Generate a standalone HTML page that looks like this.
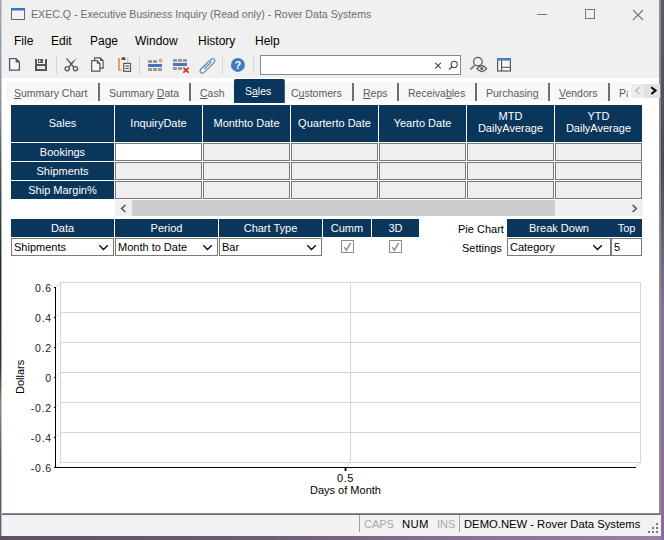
<!DOCTYPE html>
<html><head><meta charset="utf-8">
<style>
*{margin:0;padding:0;box-sizing:border-box}
html,body{width:664px;height:540px;overflow:hidden;background:#7a6a80;font-family:"Liberation Sans",sans-serif}
.a{position:absolute}
#win{position:absolute;left:1px;top:0;width:660px;height:536px;background:#fff;overflow:hidden}
#edge{position:absolute;left:0;top:0;width:1px;height:540px;background:linear-gradient(#a0a4b4 0%,#8a90a0 20%,#506058 30%,#1e2e2a 50%,#2a3a36 68%,#8a8a70 75%,#605868 85%,#6a5a72 100%)}
#edge2{position:absolute;left:1px;top:0;width:1px;height:536px;opacity:.45;background:linear-gradient(#a0a4b4 0%,#8a90a0 20%,#506058 30%,#1e2e2a 50%,#2a3a36 68%,#8a8a70 75%,#605868 85%,#6a5a72 100%)}
#redge{position:absolute;left:659px;top:0;width:2px;height:536px;background:#8c8c8c}
#title{position:absolute;left:0;top:0;width:664px;height:52px;background:#f0f0f0}
.ttl{position:absolute;left:31px;top:8px;font-size:10.6px;color:#6d6d6d;white-space:nowrap}
.menu{position:absolute;top:34px;font-size:12px;color:#000;white-space:nowrap}
#tb{position:absolute;left:0;top:52px;width:664px;height:26px;background:#f0f0f0}
.sep{position:absolute;top:55px;width:1px;height:19px;background:#d5d5d5}
.tab{position:absolute;top:87px;font-size:10.5px;color:#5a5a5a;white-space:nowrap}
.tsep{position:absolute;top:83px;width:2px;height:18px;background:#6e6e6e}
.nv{position:absolute;background:#0b365c;color:#fff;font-size:11px;text-align:center;white-space:nowrap}
.cell{position:absolute;background:#efefef;border:1px solid #7a7a7a}
.cb{position:absolute;background:#fff;border:1px solid #7a7a7a;font-size:11px;color:#000;white-space:nowrap}
.lbl{position:absolute;font-size:11px;color:#000;white-space:nowrap}
.yl{position:absolute;font-size:10.5px;color:#1a1a1a;text-align:right;width:31px;white-space:nowrap;letter-spacing:0.8px}
.gl{position:absolute;left:61px;width:580px;height:1px;background:#d3d3d3}
</style></head><body>
<div id="win">
</div>
<div id="title"></div>
<div id="tb"></div>
<div id="edge"></div><div id="edge2"></div>
<div id="redge"></div>

<!-- title bar -->
<svg class="a" style="left:11px;top:8px" width="15" height="13" viewBox="0 0 15 13">
<rect x="0.5" y="0.5" width="13" height="11" fill="#f4f4f4" stroke="#5b6878" stroke-width="1"/>
<rect x="0" y="0" width="14" height="2.5" fill="#2f78c4"/>
</svg>
<div class="ttl">EXEC.Q - Executive Business Inquiry (Read only) - Rover Data Systems</div>
<svg class="a" style="left:530px;top:0" width="130" height="30">
<line x1="7" y1="14.5" x2="17" y2="14.5" stroke="#777" stroke-width="1"/>
<rect x="55.5" y="9.5" width="9" height="9" fill="none" stroke="#777" stroke-width="1"/>
<path d="M103 10 L113 20 M113 10 L103 20" stroke="#777" stroke-width="1.1"/>
</svg>

<!-- menu -->
<div class="menu" style="left:14px">File</div>
<div class="menu" style="left:51px">Edit</div>
<div class="menu" style="left:90px">Page</div>
<div class="menu" style="left:135px">Window</div>
<div class="menu" style="left:198px">History</div>
<div class="menu" style="left:255px">Help</div>

<!-- toolbar -->
<div class="sep" style="left:56px"></div>
<div class="sep" style="left:139px"></div>
<div class="sep" style="left:222px"></div>
<div class="sep" style="left:253px"></div>

<!-- search -->
<div class="a" style="left:260px;top:55px;width:201px;height:20px;background:#fff;border:1px solid #8a8a8a"></div>


<!-- toolbar icons -->
<svg class="a" style="left:0;top:52px" width="520" height="26" viewBox="0 52 520 26">
 <!-- new doc -->
 <path d="M9.6 58.6 H16 L19.4 62 V70.2 H9.6 Z" fill="#f7f7f7" stroke="#555" stroke-width="1.3"/>
 <path d="M15.6 58 L20 62.4 H15.6 Z" fill="#555"/>
 <!-- floppy -->
 <path fill="#555" d="M35 59 H37 V71 H35 Z M45 59 H47 V71 H45 Z M35 64 H47 V66 H35 Z M35 69 H47 V71 H35 Z"/>
 <path fill="#555" fill-rule="evenodd" d="M38 59 H43 V63 H38 Z M39 60 H40.4 V62 H39 Z"/>
 <rect x="37.5" y="67.2" width="6.5" height="0.7" fill="#c8c8c8"/>
 <!-- scissors -->
 <circle cx="67.2" cy="68.8" r="2.1" fill="none" stroke="#555" stroke-width="1.3"/>
 <circle cx="75.5" cy="68.8" r="2.1" fill="none" stroke="#555" stroke-width="1.3"/>
 <path d="M66.5 58.4 L73.6 67" stroke="#555" stroke-width="1.3"/>
 <path d="M76.8 58.3 L72 64.2 L70.6 63 Z" fill="#555"/>
 <path d="M69 67 L71.5 64" stroke="#555" stroke-width="1.3"/>
 <!-- copy -->
 <path d="M94.6 57.9 H100.2 L103.1 60.8 V68.2 H94.6 Z" fill="#f7f7f7" stroke="#555" stroke-width="1.2"/>
 <path d="M100 57.4 L103.6 61 H100 Z" fill="#555"/>
 <path d="M91.7 60.7 H97 L99.9 63.6 V71.1 H91.7 Z" fill="#f7f7f7" stroke="#555" stroke-width="1.2"/>
 <path d="M96.8 60.2 L100.4 63.8 H96.8 Z" fill="#555"/>
 <!-- paste -->
 <rect x="118" y="58" width="2" height="12.6" fill="#f0a040"/>
 <rect x="119.5" y="69.6" width="2" height="1" fill="#888"/>
 <path d="M121.2 60 L121.7 57.8 Q123.5 56.4 125.3 57.8 L125.8 60 Z" fill="#555"/>
 <rect x="127.2" y="57.8" width="1" height="1.6" fill="#aaa"/>
 <rect x="127.2" y="60.4" width="1" height="1.6" fill="#aaa"/>
 <rect x="123.7" y="63.4" width="6.8" height="7.9" fill="#f7f7f7" stroke="#555" stroke-width="1.2"/>
 <rect x="125.3" y="65.3" width="3.6" height="1.2" fill="#555"/>
 <rect x="125.3" y="67.8" width="3.6" height="1.2" fill="#555"/>
 <!-- insert row -->
 <rect x="148" y="60" width="4" height="3" fill="#9a9a9a"/>
 <rect x="153" y="60" width="4" height="3" fill="#9a9a9a"/>
 <circle cx="160.6" cy="60.6" r="2.1" fill="#f0a860"/>
 <rect x="148" y="64" width="14" height="3" fill="#4676b6"/>
 <rect x="148" y="68" width="4" height="3" fill="#9a9a9a"/>
 <rect x="153" y="68" width="4" height="3" fill="#9a9a9a"/>
 <rect x="158" y="68" width="4" height="3" fill="#9a9a9a"/>
 <!-- delete row -->
 <rect x="173" y="59" width="4" height="3" fill="#9a9a9a"/>
 <rect x="178" y="59" width="4" height="3" fill="#9a9a9a"/>
 <rect x="183" y="59" width="4" height="3" fill="#9a9a9a"/>
 <rect x="173" y="63" width="14" height="3" fill="#4676b6"/>
 <rect x="173" y="67" width="4" height="3" fill="#9a9a9a"/>
 <rect x="178" y="67" width="4" height="3" fill="#9a9a9a"/>
 <path d="M183.4 67.6 L188.6 72.6 M188.6 67.6 L183.4 72.6" stroke="#d42a2a" stroke-width="1.6"/>
 <!-- paperclip -->
 <path d="M203.5 66.8 L210.6 59.6 Q212.6 57.7 214.2 59.3 Q215.8 60.9 213.8 62.9 L205.2 71.4 Q202.2 74.3 200.6 72.6 Q199.0 70.9 201.9 68.0 L208.6 61.4 Q209.8 60.3 210.6 61.1 Q211.4 61.9 210.2 63.1 L204.2 69" fill="none" stroke="#6a8ab0" stroke-width="1.2"/>
 <!-- help -->
 <circle cx="237.9" cy="64.9" r="7" fill="#3f7dc0"/>
 <text x="237.9" y="68.9" font-family="Liberation Sans" font-weight="bold" font-size="10.5" fill="#fff" text-anchor="middle">?</text>
 <!-- search x and magnifier -->
 <path d="M435.3 62.8 L440.8 68.3 M440.8 62.8 L435.3 68.3" stroke="#444" stroke-width="1.1"/>
 <circle cx="454.2" cy="64.4" r="3.1" fill="none" stroke="#444" stroke-width="1.1"/>
 <path d="M452.0 66.7 L449.0 69.6" stroke="#444" stroke-width="1.2"/>
 <!-- magnifier eye -->
 <circle cx="477.9" cy="61.6" r="4.3" fill="none" stroke="#555" stroke-width="1.2"/>
 <path d="M470.4 69.4 L474.6 65.4" stroke="#5a80ac" stroke-width="1.9"/>
 <path d="M476.9 68.6 Q481.8 62.6 486.7 68.6 Q481.8 74.6 476.9 68.6 Z" fill="#f0f0f0" stroke="#555" stroke-width="1.2"/>
 <circle cx="481.8" cy="68.5" r="1.5" fill="#555"/>
 <!-- layout -->
 <rect x="497.6" y="58.6" width="12.8" height="12.4" fill="#f7f7f7" stroke="#555" stroke-width="1.2"/>
 <rect x="497" y="58" width="14" height="2.6" fill="#4a7cc0"/>
 <rect x="501" y="60.5" width="1.1" height="10.5" fill="#555"/>
 <rect x="501" y="66.8" width="10" height="1.1" fill="#555"/>
</svg>

<!-- tabs -->
<div class="a" style="left:6px;top:82px;width:624px;height:19px;background:#f7f7f7"></div>
<div class="tab" style="left:14px"><u>S</u>ummary Chart</div>
<div class="tsep" style="left:98px"></div>
<div class="tab" style="left:109px">Summary <u>D</u>ata</div>
<div class="tsep" style="left:189px"></div>
<div class="tab" style="left:200px"><u>C</u>ash</div>
<div class="a" style="left:234px;top:79px;width:51px;height:24px;background:#0b365c;border-radius:2px 2px 0 0;border-right:1px solid #4a5e74"></div>
<div class="tab" style="left:245px;top:85px;color:#fff">S<u>a</u>les</div>
<div class="tab" style="left:291px">C<u>u</u>stomers</div>
<div class="tsep" style="left:352px"></div>
<div class="tab" style="left:363px"><u>R</u>eps</div>
<div class="tsep" style="left:397px"></div>
<div class="tab" style="left:408px">Receiva<u>b</u>les</div>
<div class="tsep" style="left:475px"></div>
<div class="tab" style="left:486px">Purchasin<u>g</u></div>
<div class="tsep" style="left:548px"></div>
<div class="tab" style="left:559px"><u>V</u>endors</div>
<div class="tsep" style="left:608px"></div>
<div class="tab" style="left:619px;width:9px;overflow:hidden">Pa</div>
<div class="a" style="left:631px;top:84px;width:13px;height:14px;background:#ececec"></div>
<div class="a" style="left:644px;top:84px;width:16px;height:14px;background:#e2e2e2"></div>

<!-- grid header -->
<div class="nv" style="left:11px;top:105px;width:103px;height:37px;line-height:37px">Sales</div>
<div class="nv" style="left:115px;top:105px;width:87px;height:37px;line-height:37px">InquiryDate</div>
<div class="nv" style="left:203px;top:105px;width:87px;height:37px;line-height:37px">Monthto Date</div>
<div class="nv" style="left:291px;top:105px;width:87px;height:37px;line-height:37px">Quarterto Date</div>
<div class="nv" style="left:379px;top:105px;width:87px;height:37px;line-height:37px">Yearto Date</div>
<div class="nv" style="left:467px;top:105px;width:87px;height:37px;padding-top:6px;line-height:11.5px">MTD<br>DailyAverage</div>
<div class="nv" style="left:555px;top:105px;width:87px;height:37px;padding-top:6px;line-height:11.5px">YTD<br>DailyAverage</div>

<div class="nv" style="left:11px;top:143px;width:103px;height:18px;line-height:18px">Bookings</div>
<div class="nv" style="left:11px;top:162px;width:103px;height:18px;line-height:18px">Shipments</div>
<div class="nv" style="left:11px;top:181px;width:103px;height:18px;line-height:18px">Ship Margin%</div>

<div class="cell" style="left:115px;top:143px;width:87px;height:18px;background:#fff"></div>
<div class="cell" style="left:203px;top:143px;width:87px;height:18px"></div>
<div class="cell" style="left:291px;top:143px;width:87px;height:18px"></div>
<div class="cell" style="left:379px;top:143px;width:87px;height:18px"></div>
<div class="cell" style="left:467px;top:143px;width:87px;height:18px"></div>
<div class="cell" style="left:555px;top:143px;width:87px;height:18px"></div>
<div class="cell" style="left:115px;top:162px;width:87px;height:18px"></div>
<div class="cell" style="left:203px;top:162px;width:87px;height:18px"></div>
<div class="cell" style="left:291px;top:162px;width:87px;height:18px"></div>
<div class="cell" style="left:379px;top:162px;width:87px;height:18px"></div>
<div class="cell" style="left:467px;top:162px;width:87px;height:18px"></div>
<div class="cell" style="left:555px;top:162px;width:87px;height:18px"></div>
<div class="cell" style="left:115px;top:181px;width:87px;height:18px"></div>
<div class="cell" style="left:203px;top:181px;width:87px;height:18px"></div>
<div class="cell" style="left:291px;top:181px;width:87px;height:18px"></div>
<div class="cell" style="left:379px;top:181px;width:87px;height:18px"></div>
<div class="cell" style="left:467px;top:181px;width:87px;height:18px"></div>
<div class="cell" style="left:555px;top:181px;width:87px;height:18px"></div>

<!-- scrollbar -->
<div class="a" style="left:115px;top:200px;width:528px;height:16px;background:#f0f0f0"></div>
<div class="a" style="left:132px;top:200px;width:423px;height:16px;background:#cdcdcd"></div>

<!-- controls -->
<div class="nv" style="left:11px;top:219px;width:103px;height:18px;line-height:18px">Data</div>
<div class="nv" style="left:115px;top:219px;width:103px;height:18px;line-height:18px">Period</div>
<div class="nv" style="left:219px;top:219px;width:103px;height:18px;line-height:18px">Chart Type</div>
<div class="nv" style="left:323px;top:219px;width:48px;height:18px;line-height:18px">Cumm</div>
<div class="nv" style="left:372px;top:219px;width:47px;height:18px;line-height:18px">3D</div>
<div class="nv" style="left:507px;top:219px;width:104px;height:18px;line-height:18px">Break Down</div>
<div class="nv" style="left:611px;top:219px;width:31px;height:18px;line-height:18px">Top</div>

<div class="cb" style="left:11px;top:238px;width:103px;height:18px;line-height:16px;padding-left:2px">Shipments</div>
<div class="cb" style="left:115px;top:238px;width:103px;height:18px;line-height:16px;padding-left:2px">Month to Date</div>
<div class="cb" style="left:219px;top:238px;width:103px;height:18px;line-height:16px;padding-left:2px">Bar</div>
<div class="cb" style="left:507px;top:238px;width:104px;height:18px;line-height:16px;padding-left:2px">Category</div>
<div class="cb" style="left:611px;top:238px;width:31px;height:18px;line-height:16px;padding-left:2px">5</div>
<div class="lbl" style="left:458px;top:223px">Pie Chart</div>
<div class="lbl" style="left:462px;top:242px">Settings</div>


<!-- scroll arrows, chevrons, checkboxes -->
<svg class="a" style="left:0;top:0" width="664" height="540">
 <path d="M125.4 205 L121.6 208.5 L125.4 212" fill="none" stroke="#555" stroke-width="1.6"/>
 <path d="M632.6 205 L636.4 208.5 L632.6 212" fill="none" stroke="#555" stroke-width="1.6"/>
 <path d="M639.5 87.2 L635.8 90.6 L639.5 94" fill="none" stroke="#c4c4c4" stroke-width="1.6"/>
 <path d="M651.3 87.2 L655.6 90.6 L651.3 94" fill="none" stroke="#000" stroke-width="2"/>
 <path d="M99.3 245.3 L103.5 249.5 L107.8 245.3" fill="none" stroke="#000" stroke-width="1.3"/>
 <path d="M203.3 245.3 L207.5 249.5 L211.8 245.3" fill="none" stroke="#000" stroke-width="1.3"/>
 <path d="M307.3 245.3 L311.5 249.5 L315.8 245.3" fill="none" stroke="#000" stroke-width="1.3"/>
 <path d="M593.3 245.3 L597.5 249.5 L601.8 245.3" fill="none" stroke="#000" stroke-width="1.3"/>
 <rect x="341.5" y="240.5" width="12" height="12" fill="#fff" stroke="#8c8c8c" stroke-width="1"/>
 <path d="M344.3 247.3 L346.5 250.2 L350.6 243" fill="none" stroke="#8c8c8c" stroke-width="1.5"/>
 <rect x="389.5" y="240.5" width="12" height="12" fill="#fff" stroke="#8c8c8c" stroke-width="1"/>
 <path d="M392.3 247.3 L394.5 250.2 L398.6 243" fill="none" stroke="#8c8c8c" stroke-width="1.5"/>
</svg>

<!-- chart -->
<svg class="a" style="left:0;top:0" width="664" height="540">
<rect x="60.5" y="282.5" width="580" height="180" fill="none" stroke="#d6d6d6" stroke-width="1"/>
<line x1="61" y1="312.5" x2="640" y2="312.5" stroke="#d6d6d6" stroke-width="1"/>
<line x1="61" y1="342.5" x2="640" y2="342.5" stroke="#d6d6d6" stroke-width="1"/>
<line x1="61" y1="372.5" x2="640" y2="372.5" stroke="#d6d6d6" stroke-width="1"/>
<line x1="61" y1="402.5" x2="640" y2="402.5" stroke="#d6d6d6" stroke-width="1"/>
<line x1="61" y1="432.5" x2="640" y2="432.5" stroke="#d6d6d6" stroke-width="1"/>
<line x1="55.5" y1="287.5" x2="60.8" y2="282.2" stroke="#d6d6d6" stroke-width="1"/>
<rect x="54" y="287" width="1" height="1" fill="#000"/>
<line x1="55.5" y1="317.5" x2="60.8" y2="312.2" stroke="#d6d6d6" stroke-width="1"/>
<rect x="54" y="317" width="1" height="1" fill="#000"/>
<line x1="55.5" y1="347.5" x2="60.8" y2="342.2" stroke="#d6d6d6" stroke-width="1"/>
<rect x="54" y="347" width="1" height="1" fill="#000"/>
<line x1="55.5" y1="377.5" x2="60.8" y2="372.2" stroke="#d6d6d6" stroke-width="1"/>
<rect x="54" y="377" width="1" height="1" fill="#000"/>
<line x1="55.5" y1="407.5" x2="60.8" y2="402.2" stroke="#d6d6d6" stroke-width="1"/>
<rect x="54" y="407" width="1" height="1" fill="#000"/>
<line x1="55.5" y1="437.5" x2="60.8" y2="432.2" stroke="#d6d6d6" stroke-width="1"/>
<rect x="54" y="437" width="1" height="1" fill="#000"/>
<line x1="55.5" y1="467.5" x2="60.8" y2="462.2" stroke="#d6d6d6" stroke-width="1"/>
<rect x="54" y="467" width="1" height="1" fill="#000"/>
<line x1="350.5" y1="282.5" x2="350.5" y2="462.5" stroke="#d6d6d6" stroke-width="1"/>
<line x1="350.5" y1="462.5" x2="345.5" y2="467.5" stroke="#d6d6d6" stroke-width="1"/>
<line x1="640.5" y1="462.5" x2="635.5" y2="467.5" stroke="#d6d6d6" stroke-width="1"/>
<rect x="55" y="287" width="1" height="181" fill="#000"/>
<rect x="54" y="467" width="582" height="1" fill="#000"/>
<rect x="344.6" y="467" width="1.8" height="4" fill="#000"/>
</svg>

<div class="yl" style="left:21px;top:282px">0.6</div>
<div class="yl" style="left:21px;top:312px">0.4</div>
<div class="yl" style="left:21px;top:342px">0.2</div>
<div class="yl" style="left:21px;top:372px">0</div>
<div class="yl" style="left:21px;top:402px">-0.2</div>
<div class="yl" style="left:21px;top:432px">-0.4</div>
<div class="yl" style="left:21px;top:462px">-0.6</div>
<div class="lbl" style="left:337px;top:472px;letter-spacing:0.6px">0.5</div>
<div class="lbl" style="left:310px;top:484px">Days of Month</div>
<div class="lbl" style="left:2px;top:370px;transform:rotate(-90deg);transform-origin:center;width:36px">Dollars</div>

<!-- status bar -->
<div class="a" style="left:2px;top:513px;width:658px;height:2px;background:linear-gradient(#909090 50%,#686868 50%)"></div>
<div class="a" style="left:2px;top:515px;width:659px;height:21px;background:#f2f2f2"></div>
<div class="a" style="left:359px;top:515px;width:1px;height:17px;background:#a0a0a0"></div>
<div class="a" style="left:459px;top:515px;width:1px;height:17px;background:#a0a0a0"></div>
<div class="a" style="left:364px;top:518px;font-size:11px;color:#a8a8a8">CAPS</div>
<div class="a" style="left:402px;top:518px;font-size:11.3px;letter-spacing:0.4px;color:#000">NUM</div>
<div class="a" style="left:437px;top:518px;font-size:11px;color:#a8a8a8">INS</div>
<div class="a" style="left:464px;top:518px;font-size:11.25px;color:#000;white-space:nowrap">DEMO.NEW - Rover Data Systems</div>
<svg class="a" style="left:640px;top:516px" width="24" height="24">
<g fill="#7a7a7a"><rect x="16" y="7" width="2" height="2"/><rect x="12" y="11" width="2" height="2"/><rect x="16" y="11" width="2" height="2"/><rect x="8" y="15" width="2" height="2"/><rect x="12" y="15" width="2" height="2"/><rect x="16" y="15" width="2" height="2"/></g>
</svg>
<div class="a" style="left:0;top:536px;width:664px;height:4px;background:linear-gradient(90deg,#5e5064 0%,#6e5c74 40%,#8a7098 70%,#9a80a6 100%)"></div>
<div class="a" style="left:661px;top:0;width:3px;height:540px;background:linear-gradient(#5a5a68 0%,#4a4a58 30%,#6a6a80 48%,#8a6e9e 58%,#8c6c9c 100%)"></div>
</body></html>
